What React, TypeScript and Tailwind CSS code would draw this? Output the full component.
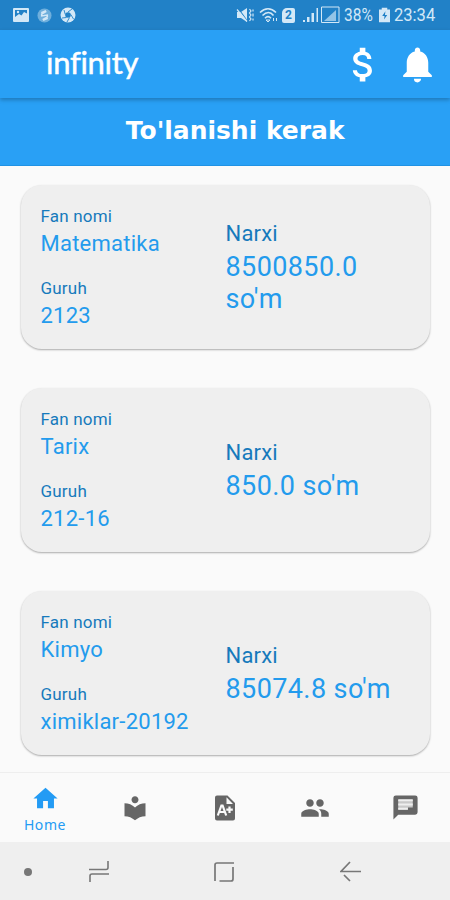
import { MdAttachMoney, MdGroup, MdHome, MdLocalLibrary, MdNotifications } from 'react-icons/md'

interface Payment {
  subject: string
  group: string
  price: string
}

const payments: Payment[] = [
  { subject: 'Matematika', group: '2123', price: "8500850.0 so'm" },
  { subject: 'Tarix', group: '212-16', price: "850.0 so'm" },
  { subject: 'Kimyo', group: 'ximiklar-20192', price: "85074.8 so'm" },
]

const StatusBar = () => (
  <div className="flex h-[30px] shrink-0 items-center bg-[#2181c7] pl-[13px] pr-3.5 text-[#d3e8f7]">
    <div className="flex items-center gap-2">
      <svg className="h-3.5 w-4" viewBox="0 0 16 14" aria-hidden="true">
        <rect width="16" height="14" rx="1" fill="currentColor" />
        <path d="M2 2h12v3.500L11 4 8.500 7.500 6 6 2 9z" fill="#2181c7" />
        <circle cx="5" cy="4" r="1.200" fill="currentColor" />
      </svg>
      <svg className="h-[15px] w-[15px]" viewBox="0 0 16 16" fill="none" aria-hidden="true">
        <circle cx="8" cy="8" r="7.5" fill="#6fafdc" />
        <path d="M10 3.500 5 6.500v2l6-1v2L6 12.500M4.500 5l5-2M11.500 11l-5 2" stroke="#d3e8f7" strokeWidth="1.600" />
      </svg>
      <svg className="h-4 w-4" viewBox="0 0 16 16" aria-hidden="true">
        <circle cx="8" cy="8" r="7.5" fill="currentColor" />
        <circle cx="8" cy="8" r="2.800" fill="#2181c7" />
        <path d="m8 5 4-3M10.800 7.500 13.500 12M9.500 10.500 7 15M6.500 10.500 2 11M5.300 7.500 4 3" stroke="#2181c7" strokeWidth=".9" />
      </svg>
    </div>
    <div className="ml-auto flex items-center">
      <svg className="h-4 w-[18px]" viewBox="0 0 18 16" fill="currentColor" aria-hidden="true">
        <path d="M1 5h4l6-4v14l-6-4H1z" />
        <path d="m2 1 10 14" stroke="#2181c7" strokeWidth="1.200" />
        <path d="m1 2.500 10 12" stroke="currentColor" strokeWidth="1.200" />
        <path d="m13.500 2 1.500 2-1.500 2 1.500 2-1.500 2 1.500 2-1.500 2M17 2.500v2m0 2v3m0 2v2" stroke="currentColor" strokeWidth="1.200" fill="none" />
      </svg>
      <svg className="ml-[5px] h-4 w-[19px]" viewBox="0 0 19 16" fill="none" stroke="currentColor" strokeWidth="1.600" aria-hidden="true">
        <path d="M1 5.500c5-5 11-5 16 0M3.500 8.500c4-4 8-4 11 0M6 11.200c2-2 4-2 6 0" />
        <path d="m9 15-2-2h4zM14.500 14v-3M17.500 11v3" strokeWidth="1" />
      </svg>
      <span className="ml-1 flex h-[15px] w-[13px] items-center justify-center rounded-[2px] rounded-tl-[5px] bg-[#d3e8f7] text-[12px] font-bold text-[#2181c7]">2</span>
      <svg className="ml-2 h-[18px] w-[37px]" viewBox="0 0 37 18" fill="currentColor" aria-hidden="true">
        <path d="M0 14h2v2H0zM4 11h2.500v5H4zM8.500 7H11v9H8.500zM13.500 2H15v14h-1.500z" />
        <path d="M18.500 1h17.500v15.500H18.500z" fill="none" stroke="currentColor" />
        <path d="M21 15 33 4v11z" opacity=".65" />
      </svg>
      <span className="ml-1 w-[30px] whitespace-nowrap text-[18px] leading-none">
        <span className="inline-block origin-left scale-x-[.86]">38%</span>
      </span>
      <svg className="ml-[5px] h-4 w-[11px]" viewBox="0 0 12 16" aria-hidden="true">
        <path d="M3 0h6v2h3v14H0V2h3z" fill="currentColor" />
        <path d="M7 4 3.500 9h2.500L5.500 13l3.500-5H6.500z" fill="#2181c7" />
      </svg>
      <span className="ml-1 w-[42px] whitespace-nowrap text-[18px] leading-none">
        <span className="inline-block origin-left scale-x-[.92]">23:34</span>
      </span>
    </div>
  </div>
)

const PaymentCard = ({ payment }: { payment: Payment }) => (
  <div className="flex h-[164px] rounded-[21px] bg-[#efefef] px-5 shadow-[0_1px_2px_rgba(0,0,0,0.32)]">
    <div className="w-[185px] shrink-0 whitespace-nowrap pt-5 text-[#239bed]">
      <div className="text-[17px] leading-[22px] tracking-[.2px] text-[#167abc]">Fan nomi</div>
      <div className="text-[22px] leading-[33px] tracking-[.25px]">{payment.subject}</div>
      <div className="mt-[17px] text-[17px] leading-[22px] tracking-[.2px] text-[#167abc]">Guruh</div>
      <div className="text-[22px] leading-[33px] tracking-[.25px]">{payment.group}</div>
    </div>
    <div className="flex w-[170px] flex-col justify-center pb-px text-[#239bed]">
      <div className="text-[22px] leading-[34px] tracking-[.2px] text-[#167abc]">Narxi</div>
      <div className="text-[27px] leading-8 tracking-[.4px]">{payment.price}</div>
    </div>
  </div>
)

const BottomNav = () => (
  <nav className="grid h-[70px] shrink-0 grid-cols-5 items-center justify-items-center border-t border-[#eeeeee] bg-[#fafafa] text-[#666666]">
    <div className="flex flex-col items-center pt-0.5 text-[#239bf4]">
      <MdHome className="ml-px h-[29px] w-[29px]" aria-hidden="true" />
      <span className="mt-[3px] font-['Noto_Sans',sans-serif] text-[14px] leading-[18px] tracking-[.6px]">Home</span>
    </div>
    <MdLocalLibrary className="h-7 w-7" aria-hidden="true" />
    <svg className="h-7 w-7" viewBox="0 0 28 28" fill="currentColor" aria-hidden="true">
      <path fillRule="evenodd" d="M6 1.500h10.500L24 9v15.500a2 2 0 0 1-2 2H6a2 2 0 0 1-2-2v-21a2 2 0 0 1 2-2Zm9.500 1.700V10H22Z" />
      <path d="m6.800 21.500 3.600-10h1.200l3.600 10M8.500 18h5M18.500 12.500v6.500M15.300 15.700h6.500" fill="none" stroke="#fafafa" strokeWidth="2.200" />
    </svg>
    <MdGroup className="h-[30px] w-[30px]" aria-hidden="true" />
    <svg className="h-[29px] w-[29px]" viewBox="0 0 24 24" aria-hidden="true">
      <path d="M4 2h16a2 2 0 0 1 2 2v12a2 2 0 0 1-2 2H6l-4 4V4a2 2 0 0 1 2-2Z" fill="currentColor" />
      <path d="M6 5.500h12V12h-4v2H6z" fill="#c9c9c9" />
      <path d="M6 6h12M6 9.500h12M6 13h8" stroke="#efefef" strokeWidth="1.500" />
    </svg>
  </nav>
)

const SystemNav = () => (
  <div className="flex h-[58px] shrink-0 items-center bg-[#efefef] pt-px text-[#777777]">
    <span className="ml-6 h-2 w-2 rounded-full bg-[#777777]" />
    <svg className="ml-14 h-6 w-[22px]" viewBox="0 0 22 24" fill="none" stroke="currentColor" strokeWidth="1.600" aria-hidden="true">
      <path d="M1 9.500h17q2 0 2-2V1M21 14H4q-2 0-2 2v6" />
    </svg>
    <svg className="ml-[103px] h-[22px] w-[22px]" viewBox="0 0 22 22" fill="none" stroke="currentColor" strokeWidth="1.700" aria-hidden="true">
      <path d="M21 2H4Q2 2 2 4v16M6.500 20H18q2 0 2-2V6" />
    </svg>
    <svg className="ml-[105px] h-[22px] w-[22px]" viewBox="0 0 22 22" fill="none" stroke="currentColor" strokeWidth="1.700" aria-hidden="true">
      <path d="M10 1 1 10.500h20M4 14l6 6" />
    </svg>
  </div>
)

export default function App() {
  return (
    <div className="flex h-[900px] w-[450px] flex-col overflow-hidden bg-[#fafafa] font-[Roboto,sans-serif]">
      <StatusBar />
      <header className="z-10 flex h-[68px] shrink-0 items-center bg-[#29a0f5] text-white shadow-[0_2px_4px_rgba(0,0,0,0.25)]">
        <h1 className="ml-[46px] pb-1 font-[Lato,sans-serif] text-[31px] leading-none tracking-[-.3px] [-webkit-text-stroke:.5px_white]">infinity</h1>
        <MdAttachMoney className="ml-auto h-[45px] w-[45px]" aria-label="To'lovlar" />
        <MdNotifications className="ml-2.5 mr-[11px] h-[43px] w-[43px]" aria-label="Bildirishnomalar" />
      </header>
      <div className="flex h-[68px] shrink-0 items-center justify-center border-b border-[#2092e4] bg-[#29a0f5] pb-0.5 pl-5 text-white">
        <h2 className="scale-x-[1.04] font-['DejaVu_Sans',sans-serif] text-[24px] font-bold leading-none">To'lanishi kerak</h2>
      </div>
      <main className="flex flex-1 flex-col gap-[39px] overflow-hidden pl-[20.5px] pr-5 pt-[18.5px]">
        {payments.map((payment) => (
          <PaymentCard key={payment.subject} payment={payment} />
        ))}
      </main>
      <BottomNav />
      <SystemNav />
    </div>
  )
}
